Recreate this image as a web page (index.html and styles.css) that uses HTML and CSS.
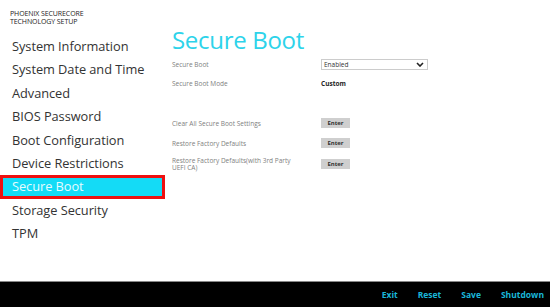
FILE: index.html
```html
<!DOCTYPE html>
<html>
<head>
<meta charset="utf-8">
<link rel="stylesheet" href="styles.css">
</head>
<body>
<div class="screen">
  <div class="top">
    <aside class="sidebar">
      <div class="brand">PHOENIX SECURECORE<br>TECHNOLOGY SETUP</div>
      <ul class="menu">
        <li>System Information</li>
        <li>System Date and Time</li>
        <li>Advanced</li>
        <li>BIOS Password</li>
        <li>Boot Configuration</li>
        <li>Device Restrictions</li>
        <li class="active">Secure Boot</li>
        <li>Storage Security</li>
        <li>TPM</li>
      </ul>
    </aside>
    <main class="content">
      <h1 class="title">Secure Boot</h1>
      <div class="row r1">
        <div class="label">Secure Boot</div>
        <div class="value">
          <div class="select"><span>Enabled</span>
            <svg class="chev" width="8" height="5" viewBox="0 0 8 5"><path d="M1 1 L4 4 L7 1" fill="none" stroke="#222" stroke-width="1.6"/></svg>
          </div>
        </div>
      </div>
      <div class="row r2">
        <div class="label">Secure Boot Mode</div>
        <div class="value strong">Custom</div>
      </div>
      <div class="row r3">
        <div class="label">Clear All Secure Boot Settings</div>
        <div class="value"><span class="btn">Enter</span></div>
      </div>
      <div class="row r4">
        <div class="label">Restore Factory Defaults</div>
        <div class="value"><span class="btn">Enter</span></div>
      </div>
      <div class="row r5">
        <div class="label">Restore Factory Defaults(with 3rd Party UEFI CA)</div>
        <div class="value"><span class="btn">Enter</span></div>
      </div>
    </main>
  </div>
  <footer class="footer">
    <span class="fbtn">Exit</span>
    <span class="fbtn">Reset</span>
    <span class="fbtn">Save</span>
    <span class="fbtn">Shutdown</span>
  </footer>
</div>
</body>
</html>
```

FILE: styles.css
```css
* { box-sizing: border-box; }
html, body { margin: 0; padding: 0; background: #fff; }
body { font-family: "Open Sans", "Noto Sans", sans-serif; color: #333; }
.screen { width: 550px; height: 307px; display: flex; flex-direction: column; overflow: hidden; }
.top { flex: 1; display: flex; }
.sidebar { width: 172px; flex: none; }
.brand { font-size: 7px; line-height: 7.5px; color: #222; padding: 10px 0 0 10px; letter-spacing: -0.1px; height: 35px; }
.menu { list-style: none; margin: 0; padding: 0; }
.menu li { height: 23.4px; line-height: 23px; font-size: 12.8px; color: #333; padding-left: 12px; letter-spacing: -0.05px; }
.menu li.active { width: 165px; background: #14dbf6; color: #e8fbff; border: 3px solid #ee1111; padding-left: 9px; line-height: 17px; margin: 0; }
.content { flex: 1; padding-top: 26px; }
.title { margin: 0; font-weight: 400; font-size: 24px; line-height: 28px; color: #2dd3ea; letter-spacing: -0.3px; }
.row { display: flex; align-items: center; }
.label { width: 149px; font-size: 6.5px; color: #808080; line-height: 7px; }
.value { font-size: 6.5px; }
.strong { font-weight: 700; color: #222; }
.r1 { margin-top: 4px; height: 12px; }
.r2 { margin-top: 7px; height: 12px; }
.r3 { margin-top: 28px; height: 12px; }
.r4 { margin-top: 8px; height: 12px; }
.r5 { margin-top: 8px; height: 14px; }
.r5 .label { width: 130px; margin-right: 19px; }
.select { width: 107px; height: 11px; border: 1px solid #ccc; display: flex; align-items: center; justify-content: space-between; padding: 0 3px 0 2px; color: #333; font-size: 6.5px; }
.btn { display: inline-block; width: 29px; height: 10px; line-height: 10px; background: #cfcfcf; text-align: center; font-weight: 700; color: #333; font-size: 6px; }
.footer { height: 26px; flex: none; background: #000; border-top: 1px solid #888; display: flex; justify-content: flex-end; align-items: center; padding-right: 6px; }
.fbtn { color: #1ab6d8; font-weight: 700; font-size: 8.5px; margin-left: 20px; }
.fbtn:first-child { margin-left: 0; }
```
